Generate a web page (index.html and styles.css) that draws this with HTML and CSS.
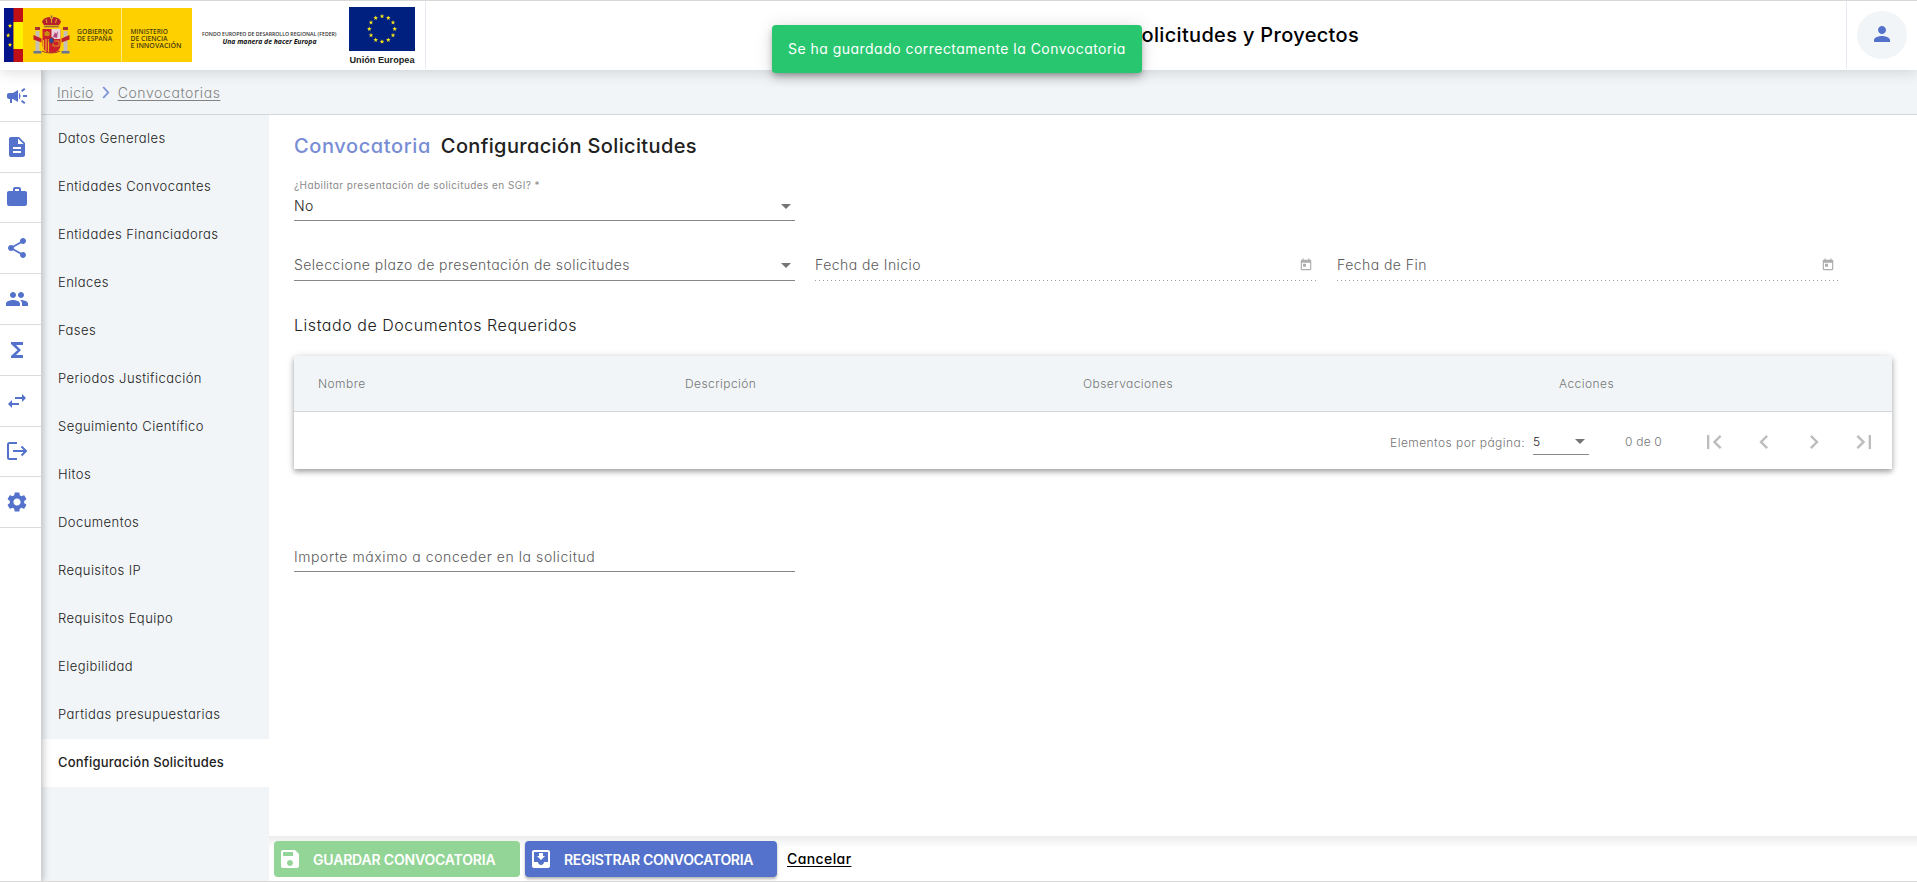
FILE: index.html
```html
<!DOCTYPE html>
<html lang="es">
<head>
<meta charset="utf-8">
<title>Convocatoria - Configuración Solicitudes</title>
<link rel="stylesheet" href="styles.css">
</head>
<body>
<div class="app">
  <header class="topbar">
    <div class="logos">
      <svg class="logo-gob" width="188" height="54" viewBox="0 0 188 54">
        <rect width="188" height="54" fill="#ffd000"/>
        <rect width="10" height="54" fill="#061489"/>
        <rect x="9.5" width="9.5" height="54" fill="#c01015"/>
        <rect x="9.5" y="14" width="9.5" height="27" fill="#fff200"/>
        <g fill="#ffe800"><path id="st" d="M6 15.600l.6 1.500 1.500.1-1.200 1 .4 1.500-1.300-.8-1.300.8.4-1.500-1.200-1 1.500-.1z"/><use href="#st" x="-1.800" y="9.500"/><use href="#st" y="19"/></g>
        <path d="M117.500 0v54" stroke="#ffe680"/>
        <g>
          <path d="M38 14q1-5 9.500-5t9.500 5l-2.500 4h-14z" fill="#b5202a"/>
          <path d="M40 17.500h15v2H40zM46.500 7.500h2v3h-2zM42 11l1 4M52.500 11l-1 4M47.500 11v4" fill="#9c6a1e" stroke="#dca72a" stroke-width="1"/>
          <path d="M38.500 21h18v16q0 7-9 8-9-1-9-8z" fill="#cc1f2b"/>
          <path d="M47.500 21h9v10h-9z" fill="#e9d3dc"/><path d="M49 29l2-5 1 2 2-3-1 7z" fill="#b0457c"/>
          <path d="M40.500 28v-4h1.500v-1h2v1h1.500v4z" fill="#c98a14"/>
          <path d="M39.500 32v9M42 31v12M44.500 31v13" stroke="#e9ae20" stroke-width="1.200"/>
          <path d="M49 33h6v5h-6z" fill="none" stroke="#d69a1c"/>
          <ellipse cx="47.500" cy="32.500" rx="2.500" ry="3" fill="#274a92" stroke="#c01f2b"/>
          <path d="M31.500 23h4v20h-4zM59.500 23h4v20h-4z" fill="#c5bfb5"/>
          <path d="M31 19h5v3h-5zM59 19h5v3h-5z" fill="#a8322c"/>
          <path d="M29.500 27l8 3.500v4l-8-3zM65.500 27l-8 3.500v4l8-3z" fill="#bf2029"/>
          <path d="M29.500 43h8v2.500h-8zM57.500 43h8v2.500h-8z" fill="#68758d"/>
          <path d="M38 43q3 2 9 2t9-2" fill="none" stroke="#a63b2c"/>
        </g>
        <g class="gob-text">
          <text x="73" y="25.500" textLength="36" lengthAdjust="spacingAndGlyphs">GOBIERNO</text>
          <text x="73" y="32.500" textLength="35" lengthAdjust="spacingAndGlyphs">DE ESPAÑA</text>
          <text x="126.500" y="25.500" textLength="37.500" lengthAdjust="spacingAndGlyphs">MINISTERIO</text>
          <text x="126.500" y="32.500" textLength="37" lengthAdjust="spacingAndGlyphs">DE CIENCIA</text>
          <text x="126.500" y="39.500" textLength="51" lengthAdjust="spacingAndGlyphs">E INNOVACIÓN</text>
        </g>
      </svg>
      <svg class="logo-feder" width="136" height="20" viewBox="0 0 136 20">
        <text class="feder-a" x="0" y="8.500" textLength="134.500" lengthAdjust="spacingAndGlyphs">FONDO EUROPEO DE DESARROLLO REGIONAL (FEDER)</text>
        <text class="feder-b" x="20.500" y="17" textLength="94" lengthAdjust="spacingAndGlyphs">Una manera de hacer Europa</text>
      </svg>
      <svg class="logo-ue" width="66" height="60" viewBox="0 0 66 60">
        <rect width="66" height="44" fill="#00207f"/>
        <g fill="#f4e21c"><path id="es" d="M33 6.800l.6 1.600 1.700.1-1.300 1 .4 1.700-1.400-.9-1.400.9.4-1.700-1.300-1 1.700-.1z"/>
        <use href="#es" x="6.300" y="1.700"/><use href="#es" x="11" y="6.300"/><use href="#es" x="12.700" y="12.700"/><use href="#es" x="11" y="19"/><use href="#es" x="6.300" y="23.700"/><use href="#es" y="25.400"/><use href="#es" x="-6.300" y="23.700"/><use href="#es" x="-11" y="19"/><use href="#es" x="-12.700" y="12.700"/><use href="#es" x="-11" y="6.300"/><use href="#es" x="-6.300" y="1.700"/></g>
        <text class="ue-text" x="0.500" y="56" textLength="65" lengthAdjust="spacingAndGlyphs">Unión Europea</text>
      </svg>
    </div>
    <h1 class="app-title">Solicitudes y Proyectos</h1>
    <div class="user"><div class="avatar"><svg width="24" height="24" viewBox="0 0 24 24"><path d="M12 12c2.210 0 4-1.790 4-4s-1.790-4-4-4-4 1.790-4 4 1.790 4 4 4zm0 2c-2.670 0-8 1.340-8 4v2h16v-2c0-2.660-5.330-4-8-4z"/></svg></div></div>
  </header>
  <div class="body">
    <nav class="rail">
      <a><svg viewBox="0 0 24 24"><path d="M18 11v2h4v-2h-4zm-2 6.610c.96.71 2.210 1.650 3.200 2.390.4-.53.8-1.070 1.200-1.600-.99-.74-2.240-1.680-3.200-2.400-.4.540-.8 1.080-1.200 1.610zM20.400 5.600c-.4-.53-.8-1.070-1.200-1.600-.99.740-2.240 1.680-3.200 2.400.4.530.8 1.070 1.200 1.600.96-.72 2.210-1.650 3.200-2.400zM4 9c-1.100 0-2 .9-2 2v2c0 1.100.9 2 2 2h1v4h2v-4h1l5 3V6L8 9H4zm11.500 3c0-1.330-.58-2.530-1.500-3.350v6.690c.92-.81 1.500-2.010 1.500-3.340z"/></svg></a>
      <a><svg viewBox="0 0 24 24"><path d="M14 2H6c-1.100 0-1.990.9-1.990 2L4 20c0 1.100.89 2 1.990 2H18c1.100 0 2-.9 2-2V8l-6-6zm2 16H8v-2h8v2zm0-4H8v-2h8v2zm-3-5V3.500L18.500 9H13z"/></svg></a>
      <a><svg viewBox="0 0 24 24"><path d="M10 2h4c1.100 0 2 .9 2 2v2h4c1.100 0 2 .9 2 2v11c0 1.100-.9 2-2 2H4c-1.100 0-2-.9-2-2V8c0-1.100.9-2 2-2h4V4c0-1.100.9-2 2-2zm4 4V4h-4v2h4z"/></svg></a>
      <a><svg viewBox="0 0 24 24"><path d="M18 16.080c-.76 0-1.440.3-1.960.77L8.910 12.700c.05-.23.090-.46.090-.7s-.04-.47-.09-.7l7.050-4.110c.54.5 1.250.81 2.040.81 1.660 0 3-1.340 3-3s-1.340-3-3-3-3 1.340-3 3c0 .24.040.47.090.7L8.040 9.810C7.500 9.310 6.790 9 6 9c-1.660 0-3 1.340-3 3s1.340 3 3 3c.79 0 1.500-.31 2.040-.81l7.120 4.160c-.05.21-.08.43-.08.65 0 1.610 1.310 2.920 2.920 2.920s2.920-1.310 2.920-2.920-1.310-2.920-2.920-2.920z"/></svg></a>
      <a><svg viewBox="0 0 24 24"><path d="M16 11c1.660 0 2.990-1.340 2.990-3S17.660 5 16 5s-3 1.340-3 3 1.340 3 3 3zm-8 0c1.660 0 2.990-1.340 2.990-3S9.660 5 8 5 5 6.340 5 8s1.340 3 3 3zm0 2c-2.330 0-7 1.170-7 3.500V19h14v-2.500c0-2.330-4.670-3.500-7-3.500zm8 0c-.29 0-.62.020-.97.050 1.160.84 1.970 1.970 1.970 3.450V19h6v-2.500c0-2.330-4.670-3.500-7-3.500z"/></svg></a>
      <a><svg viewBox="0 0 24 24"><path d="M18 4H6v2l6.500 6L6 18v2h12v-3h-7l5-5-5-5h7z"/></svg></a>
      <a><svg viewBox="0 0 24 24"><path d="M6.990 11L3 15l3.990 4v-3H14v-2H6.990v-3zM21 9l-3.990-4v3H10v2h7.010v3L21 9z"/></svg></a>
      <a><svg viewBox="0 0 24 24"><path class="line" d="M12 4H4.500q-1.500 0-1.500 1.500v13q0 1.500 1.500 1.500H12M8 12h12.500M16.500 7.500L21 12l-4.500 4.500"/></svg></a>
      <a><svg viewBox="0 0 24 24"><path d="M19.140 12.940c.04-.3.060-.61.060-.94 0-.32-.02-.64-.07-.94l2.030-1.580c.18-.14.23-.41.120-.61l-1.920-3.320c-.12-.22-.37-.29-.59-.22l-2.390.96c-.5-.38-1.030-.7-1.620-.94L14.400 2.810c-.04-.24-.24-.41-.48-.41h-3.840c-.24 0-.43.170-.47.410L9.250 5.350c-.59.240-1.130.57-1.620.94l-2.390-.96c-.22-.08-.47 0-.59.220L2.740 8.870c-.12.210-.08.470.12.610l2.030 1.580c-.05.3-.09.630-.09.940s.02.640.07.940l-2.030 1.580c-.18.140-.23.410-.12.610l1.920 3.320c.12.220.37.290.59.220l2.390-.96c.5.380 1.030.7 1.620.94l.36 2.540c.05.240.24.410.48.410h3.840c.24 0 .44-.17.470-.41l.36-2.540c.59-.24 1.130-.56 1.620-.94l2.390.96c.22.080.47 0 .59-.22l1.920-3.320c.12-.22.070-.47-.12-.61l-2.010-1.580zM12 15.600c-1.980 0-3.600-1.620-3.600-3.600s1.620-3.600 3.600-3.600 3.600 1.620 3.600 3.600-1.620 3.600-3.600 3.600z"/></svg></a>
    </nav>
    <div class="page">
      <div class="crumbs"><a class="home">Inicio</a><svg width="8" height="13" viewBox="0 0 8 13"><path d="M1.200 1l5 5.500-5 5.500"/></svg><a>Convocatorias</a></div>
      <div class="columns">
        <ul class="menu">
          <li>Datos Generales</li>
          <li>Entidades Convocantes</li>
          <li>Entidades Financiadoras</li>
          <li>Enlaces</li>
          <li>Fases</li>
          <li>Periodos Justificación</li>
          <li>Seguimiento Científico</li>
          <li>Hitos</li>
          <li>Documentos</li>
          <li>Requisitos IP</li>
          <li>Requisitos Equipo</li>
          <li>Elegibilidad</li>
          <li>Partidas presupuestarias</li>
          <li class="active">Configuración Solicitudes</li>
        </ul>
        <main class="main">
          <div class="content">
            <h2 class="title"><span>Convocatoria</span><b>Configuración Solicitudes</b></h2>
            <div class="row first">
              <div class="field filled"><label>¿Habilitar presentación de solicitudes en SGI? *</label><div class="value">No<i class="caret"></i></div></div>
            </div>
            <div class="row second">
              <div class="field"><div class="value hint">Seleccione plazo de presentación de solicitudes<i class="caret"></i></div></div>
              <div class="field off"><div class="value hint">Fecha de Inicio<svg class="cal" viewBox="0 0 24 24"><path d="M19 3h-1V1h-2v2H8V1H6v2H5c-1.110 0-1.990.9-1.990 2L3 19c0 1.100.89 2 2 2h14c1.100 0 2-.9 2-2V5c0-1.100-.9-2-2-2zm0 16H5V8h14v11zM7 10h5v5H7z"/></svg></div></div>
              <div class="field off"><div class="value hint">Fecha de Fin<svg class="cal" viewBox="0 0 24 24"><path d="M19 3h-1V1h-2v2H8V1H6v2H5c-1.110 0-1.990.9-1.990 2L3 19c0 1.100.89 2 2 2h14c1.100 0 2-.9 2-2V5c0-1.100-.9-2-2-2zm0 16H5V8h14v11zM7 10h5v5H7z"/></svg></div></div>
            </div>
            <h3 class="subtitle">Listado de Documentos Requeridos</h3>
            <section class="table">
              <div class="thead"><span>Nombre</span><span>Descripción</span><span>Observaciones</span><span>Acciones</span></div>
              <div class="pager">
                <span>Elementos por página:</span>
                <span class="size">5<i class="caret"></i></span>
                <span class="range">0 de 0</span>
                <svg viewBox="0 0 24 24"><path d="M18.410 16.590L13.820 12l4.590-4.590L17 6l-6 6 6 6zM6 6h2v12H6z"/></svg>
                <svg viewBox="0 0 24 24"><path d="M15.410 7.410L14 6l-6 6 6 6 1.410-1.410L10.830 12z"/></svg>
                <svg viewBox="0 0 24 24"><path d="M10 6L8.590 7.410 13.170 12l-4.580 4.590L10 18l6-6z"/></svg>
                <svg viewBox="0 0 24 24"><path d="M5.590 7.410L10.180 12l-4.590 4.590L7 18l6-6-6-6zM16 6h2v12h-2z"/></svg>
              </div>
            </section>
            <div class="row third">
              <div class="field"><div class="value hint wide">Importe máximo a conceder en la solicitud</div></div>
            </div>
          </div>
          <footer class="actions">
            <button class="btn save"><svg viewBox="0 0 24 24"><path d="M17 3H5c-1.110 0-2 .9-2 2v14c0 1.100.89 2 2 2h14c1.100 0 2-.9 2-2V7l-4-4zm-5 16c-1.660 0-3-1.340-3-3s1.340-3 3-3 3 1.340 3 3-1.340 3-3 3zm3-10H5V5h10v4z"/></svg>GUARDAR CONVOCATORIA</button>
            <button class="btn register"><svg viewBox="0 0 24 24"><path d="M16 9h-2V6h-4v3H8l4 4zm3-6H4.990C3.880 3 3 3.900 3 5v14c0 1.100.88 2 1.990 2H19c1.100 0 2-.9 2-2V5c0-1.100-.9-2-2-2zm0 12h-4c0 1.660-1.350 3-3 3s-3-1.340-3-3H4.990V5H19v10z"/></svg>REGISTRAR CONVOCATORIA</button>
            <a class="cancel">Cancelar</a>
          </footer>
        </main>
      </div>
    </div>
  </div>
  <div class="toast">Se ha guardado correctamente la Convocatoria</div>
</div>
</body>
</html>
```
FILE: styles.css
```css
* { box-sizing: border-box; }
body {
  margin: 0;
  font-family: Inter, "Open Sans", sans-serif;
  font-feature-settings: "cv11";
  font-size: 13px;
  font-weight: 300;
  color: #212121;
  background: #fff;
}
.app {
  height: 882px;
  display: flex;
  flex-direction: column;
  border-top: 1px solid #d8d8d8;
  border-bottom: 1px solid #d8d8d8;
  overflow: hidden;
}

/* Top bar */
.topbar {
  height: 69px;
  flex: none;
  display: flex;
  background: #fff;
  position: relative;
  z-index: 2;
  box-shadow: 0 2px 14px rgba(0, 0, 0, .14);
}
.logos {
  width: 426px;
  height: 68px;
  padding-left: 4px;
  display: flex;
  align-items: flex-start;
  border-right: 1px solid #e8eaf2;
}
.logo-gob { margin-top: 7px; }
.logo-feder { margin: 26px 0 0 10px; }
.logo-ue { margin: 6px 0 0 11px; }
.gob-text { font: 600 7px "Open Sans", sans-serif; fill: #4a3d0c; }
.feder-a { font: 600 5px "Open Sans", sans-serif; fill: #333; }
.feder-b { font: italic 700 6.500px "Open Sans", sans-serif; fill: #111; }
.ue-text { font: bold 9px "Liberation Sans", sans-serif; fill: #222; }
.app-title {
  flex: 1;
  margin: 0;
  padding-right: 487px;
  text-align: right;
  font-size: 20px;
  line-height: 69px;
  font-weight: 500;
  letter-spacing: .32px;
  color: #000;
}
.user {
  width: 71px;
  height: 68px;
  border-left: 1px solid #e8eaf2;
  padding: 10px 0 0 10px;
}
.avatar {
  width: 50px;
  height: 48px;
  border-radius: 50%;
  background: #f1f5f8;
  display: flex;
  align-items: center;
  justify-content: center;
}
.avatar svg { fill: #5472cb; margin-top: -2px; }

.body { flex: 1; display: flex; min-height: 0; }

/* Icon rail */
.rail {
  width: 42px;
  flex: none;
  padding-top: 1px;
  background: #fff;
  border-right: 1px solid #d0d2d4;
  box-shadow: 1px 0 7px rgba(0, 0, 0, .25);
  position: relative;
  z-index: 1;
}
.rail a {
  height: 50.800px;
  display: flex;
  align-items: center;
  padding-left: 5px;
  border-bottom: 1px solid #dcdcdc;
}
.rail svg { width: 24px; height: 24px; fill: #5472cb; }
.rail .line { fill: none; stroke: #5472cb; stroke-width: 2; }

/* Breadcrumbs */
.page { flex: 1; display: flex; flex-direction: column; min-width: 0; }
.crumbs {
  height: 45px;
  flex: none;
  display: flex;
  align-items: center;
  padding-left: 15px;
  background: #f1f5f8;
  border-bottom: 1px solid #d3d7db;
  font-size: 14px;
  letter-spacing: .6px;
  color: #828282;
}
.crumbs a { text-decoration: underline; text-underline-offset: 2px; }
.crumbs .home { letter-spacing: .35px; }
.crumbs svg { margin: 0 8px; fill: none; stroke: #7b90d8; stroke-width: 1.800; }

.columns { flex: 1; display: flex; min-height: 0; }
.menu {
  width: 227px;
  flex: none;
  margin: 0;
  padding: 0;
  list-style: none;
  background: #f1f5f8;
}
.menu li { height: 48px; line-height: 47px; padding-left: 16px; font-size: 13px; letter-spacing: .45px; }
.menu .active { background: #fff; font-weight: 500; letter-spacing: .22px; }

/* Main form */
.main { flex: 1; display: flex; flex-direction: column; }
.content { flex: 1; padding: 16px 25px 0 25px; }
.title {
  margin: 0;
  height: 30px;
  line-height: 30px;
  display: flex;
  gap: 10px;
  font-size: 20px;
  font-weight: 500;
}
.title span { color: #788dd5; letter-spacing: .6px; }
.title b { font-weight: 500; letter-spacing: .36px; }
.row { display: flex; gap: 20px; }
.field { width: 502px; border-bottom: 1px solid #888; height: 30px; }
.field:first-child { width: 501px; }
.field.off { border-bottom: 0; background: repeating-linear-gradient(90deg, #a0a0a0 0 1px, transparent 1px 4px) bottom / 100% 1px no-repeat; }
.field label { display: block; height: 17px; line-height: 17px; font-size: 10px; font-weight: 400; letter-spacing: .44px; color: #8a8a8a; }
.filled { height: 44px; }
.value { height: 28px; line-height: 28px; font-size: 14px; letter-spacing: .45px; display: flex; align-items: center; justify-content: space-between; padding-right: 4px; }
.filled .value { height: 24px; }
.hint { color: #5a5a5a; }
.wide { height: 30px; letter-spacing: .57px; }
.first { margin-top: 16px; }
.second { margin-top: 30px; }
.third { margin-top: 73px; }
.caret { width: 0; height: 0; border: 5px solid transparent; border-top-color: #757575; border-bottom: 0; }
.cal { width: 14px; height: 14px; fill: #adadad; }
.subtitle { margin: 29px 0 0; height: 30px; line-height: 30px; font-size: 16px; font-weight: 300; letter-spacing: .54px; }

.table {
  margin-top: 16px;
  height: 113px;
  background: #fff;
  box-shadow: 0 3px 5px rgba(0, 0, 0, .28), 0 1px 8px rgba(0, 0, 0, .14);
}
.thead {
  height: 56px;
  display: grid;
  grid-template-columns: 367px 398px 476px 1fr;
  align-items: center;
  padding-left: 24px;
  background: #f1f5f8;
  border-bottom: 1px solid #d3d7db;
  font-size: 12px;
  letter-spacing: .43px;
  color: #757575;
}
.pager { height: 57px; display: flex; align-items: center; justify-content: flex-end; padding: 3px 14px 0 0; font-size: 12px; letter-spacing: .44px; color: #757575; }
.pager svg { width: 28px; height: 28px; margin-left: 22px; fill: #bcbcbc; }
.size { width: 56px; height: 26px; margin: 0 36px 0 8px; padding-right: 4px; border-bottom: 1px solid #888; display: flex; align-items: center; justify-content: space-between; color: #212121; }
.range { margin-right: 16px; padding-bottom: 2px; letter-spacing: .2px; }

/* Action bar */
.actions {
  height: 45px;
  display: flex;
  align-items: flex-start;
  padding: 5px 0 0 5px;
  background: linear-gradient(#ececec, #fff 12px);
}
.btn {
  height: 36px;
  border: 0;
  border-radius: 4px;
  padding: 0 0 0 4px;
  display: flex;
  align-items: center;
  font: inherit;
  font-size: 14px;
  font-weight: 600;
  color: #fff;
  white-space: nowrap;
}
.btn svg { width: 24px; height: 24px; fill: #fff; margin-right: 11px; }
.save { width: 246px; background: #93d596; margin-right: 5px; letter-spacing: -.18px; }
.register { width: 252px; background: #5472cb; box-shadow: 0 2px 3px rgba(0, 0, 0, .3); margin-right: 10px; letter-spacing: -.32px; }
.cancel { line-height: 36px; font-size: 14px; font-weight: 500; letter-spacing: .4px; color: #000; text-decoration: underline; text-underline-offset: 2px; }

/* Notification */
.toast {
  position: absolute;
  left: 772px;
  top: 25px;
  width: 370px;
  height: 48px;
  padding-left: 16px;
  line-height: 48px;
  border-radius: 4px;
  background: #28c76f;
  color: #fff;
  font-size: 14px;
  font-weight: 400;
  letter-spacing: .47px;
  z-index: 3;
  box-shadow: 0 3px 5px -1px rgba(0, 0, 0, .2), 0 6px 10px rgba(0, 0, 0, .14), 0 1px 18px rgba(0, 0, 0, .12);
}
```
